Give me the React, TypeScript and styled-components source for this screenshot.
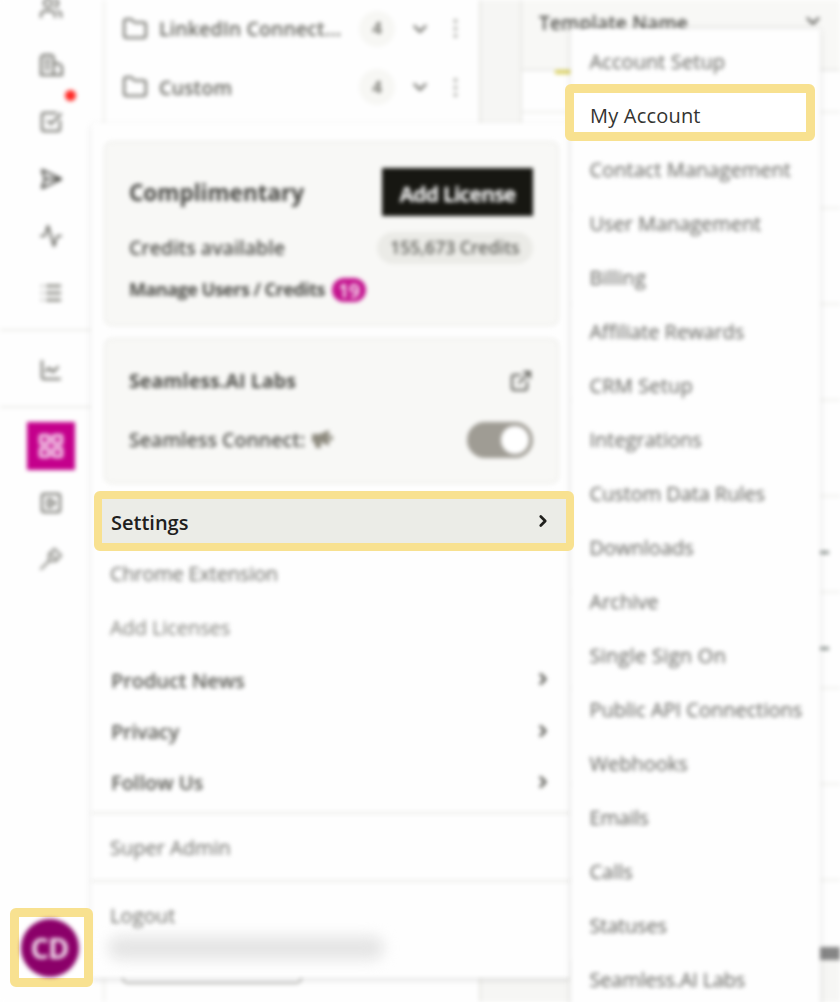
import React from 'react';
import styled, { createGlobalStyle, css } from 'styled-components';
import {
  Users, SquareCheckBig, SendHorizontal, Activity, ChartLine, LayoutGrid, SquarePlay,
  Folder, ChevronDown, ChevronRight, EllipsisVertical, ExternalLink,
} from 'lucide-react';

const Global = createGlobalStyle`
  * { box-sizing: border-box; }
  body { margin: 0; overflow: hidden; background: #fff; font-family: "Open Sans", "Noto Sans", sans-serif; color: #4b4b46; }
`;

const soft = css`filter: blur(2px);`;

const Page = styled.div`position: relative; width: 840px; height: 1002px; overflow: hidden; background: #fefefe;`;
const Backdrop = styled.div`display: flex; height: 1002px; ${soft}`;

const Rail = styled.nav`width: 105px; flex: none; border-right: 2px solid #efefeb; background: #fefefe;`;
const RailGroup = styled.div<{ $h: number; $lift?: number }>`
  width: 103px; height: ${p => p.$h}px; border-bottom: 2px solid #ededea;
  display: flex; flex-direction: column; margin-top: ${p => p.$lift ?? 0}px;
`;
const RailItem = styled.div<{ $h?: number; $tone?: string }>`
  height: ${p => p.$h ?? 57}px; flex: none; width: 102px; display: flex; align-items: center; justify-content: center;
  position: relative; color: ${p => p.$tone ?? '#64645d'};
`;
const Dot = styled.i`position: absolute; left: 65px; top: -3px; width: 11px; height: 11px; border-radius: 50%; background: #ff2a26;`;
const Active = styled.div`width: 48px; height: 48px; background: #c4008c; color: #f3cbe8; display: grid; place-items: center;`;

const Folders = styled.section`width: 376px; flex: none; background: #fefefe; border-right: 2px solid #e6e6e2; display: flex; flex-direction: column;`;
const FolderRow = styled.div`display: flex; align-items: center; height: 60px; padding: 0 11px 0 17px; color: #64645d; flex: none; &:first-child { height: 57px; }`;
const FolderName = styled.span`font-size: 19.5px; font-weight: 600; margin-left: 11px; width: 200px; letter-spacing: 0.12px; white-space: nowrap;`;
const Count = styled.span`width: 36px; height: 36px; border-radius: 50%; background: #f7f7f4; font-size: 17px; font-weight: 600; display: grid; place-items: center; margin-right: 14px; padding-bottom: 2px;`;
const More = styled(EllipsisVertical)`margin-left: auto; color: #a2a29c;`;
const SaveBar = styled.div`width: 180px; height: 30px; border: 2px solid #b4b4b0; border-radius: 6px; margin: auto 0 18px 17px;`;

const Workspace = styled.main`flex: 1; background: #f6f6f4; padding-left: 39px;`;
const Table = styled.div`background: #fefefe; border-left: 2px solid #e9e9e6; height: 960px; display: flex; flex-direction: column;`;
const TableHead = styled.div`height: 71px; flex: none; background: #f8f8f6; border-bottom: 2px solid #e9e9e6; font-size: 19px; font-weight: 600; letter-spacing: 0.2px; padding: 10px 16px 9px 17px; display: flex; justify-content: space-between;`;
const TableRow = styled.div<{ $h: number }>`height: ${p => p.$h}px; flex: none; border-bottom: 2px solid #efefec; display: flex; align-items: flex-start; justify-content: flex-end;`;
const Mark = styled.i`width: 18px; height: 4px; background: #dbd15f; margin: -1px 267px 0 0;`;
const Dash = styled.i`width: 14px; height: 3px; background: #858d89; margin: 54px 11px 0 0;`;
const ScrollThumb = styled.div`height: 13px; margin: 66px 0 0 80px; background: #858585; flex: none;`;

const Menu = styled.aside`
  position: absolute; left: 91px; top: 123px; width: 480px; height: 855px; display: flex; flex-direction: column; padding-top: 18px;
  &::before { content: ""; position: absolute; inset: 0; background: #fefefe; box-shadow: 0 2px 5px #0002; border-radius: 4px; ${soft} }
  > * { position: relative; }
`;
const Card = styled.div<{ $h: number }>`
  height: ${p => p.$h}px; flex: none; margin: 0 12px 12px 13px; padding: 0 24px 0 23px; background: #f8f8f6; border: 2px solid #efefec; border-radius: 8px; ${soft}
`;
const Line = styled.div<{ $h: number; $top?: number }>`display: flex; align-items: center; height: ${p => p.$h}px; margin-top: ${p => p.$top ?? 0}px; white-space: nowrap;`;
const Spread = styled(Line)`justify-content: space-between;`;
const Plan = styled.b`font-size: 22.5px; font-weight: 700; letter-spacing: 0.02px; color: #42423e;`;
const Label = styled.span<{ $size?: number; $weight?: number; $gap?: number }>`
  font-size: ${p => p.$size ?? 19.5}px; font-weight: ${p => p.$weight ?? 600}; letter-spacing: ${p => p.$gap ?? 0}px; color: #4b4b46;
  display: flex; align-items: center; gap: 6px; padding-bottom: 2px;
`;
const AddButton = styled.button`width: 151px; height: 48px; border: 0; background: #171712; color: #fff; font: 700 21px "Open Sans", sans-serif; letter-spacing: -0.8px; padding: 3px 0 0;`;
const Pill = styled.span`width: 156px; height: 32px; border-radius: 16px; background: #ebebe7; font-size: 17.5px; font-weight: 600; display: grid; place-items: center; color: #5f5f59; padding-bottom: 2px;`;
const Tag = styled.span`width: 34px; height: 24px; margin-left: 7px; border-radius: 12px; background: #c4148f; color: #fff; font-size: 19px; font-weight: 600; display: grid; place-items: center;`;
const Toggle = styled.span`width: 66px; height: 36px; border-radius: 18px; background: #9f9c94; display: flex; justify-content: flex-end; padding: 4px;
  &::after { content: ""; width: 28px; height: 28px; border-radius: 50%; background: #fff; }`;

const Settings = styled.div`
  display: flex; align-items: center; justify-content: space-between; height: 60px; flex: none; width: 480px; margin: -5px 0 -5px 3px;
  border: 8.5px solid #f8e190; border-radius: 6px; background: #ebece7; color: #20201d; padding: 2px 14px 0 9px; font-size: 20px; font-weight: 600; letter-spacing: 0; z-index: 3;
  svg { margin-top: -3px; }
`;
const MenuItem = styled.div<{ $h: number; $bold?: boolean; $tone?: string; $gap?: number }>`
  height: ${p => p.$h}px; flex: none; display: flex; align-items: center; justify-content: space-between;
  padding: 0 19px 0 ${p => (p.$bold ? 20 : 19)}px; font-size: 20px; font-weight: ${p => (p.$bold ? 600 : 400)};
  letter-spacing: ${p => p.$gap ?? 0}px; color: ${p => p.$tone ?? '#55554f'}; ${soft}
  svg { margin-top: -2px; }
`;
const Rule = styled.hr`height: 2px; width: 480px; flex: none; margin: 0; border: 0; background: #ebebe8; ${soft}`;
const LinksEnd = styled(Rule)`margin-top: 4px;`;
const Redacted = styled.div`width: 276px; height: 24px; flex: none; margin: -12px 0 0 17px; border-radius: 13px; background: #e5e5e5; filter: blur(7px);`;

const Submenu = styled.aside`
  position: absolute; left: 571px; top: 29px; width: 249px; height: 990px; padding-top: 5px; display: flex; flex-direction: column;
  &::before { content: ""; position: absolute; inset: 0; background: #fefefe; box-shadow: 0 0 6px #0002; ${soft} }
  > * { position: relative; }
`;
const SubItem = styled.div<{ $gap?: number }>`
  height: 54px; flex: none; padding-left: 18.5px; display: flex; align-items: center; font-size: 20px; color: #5f5f5a; white-space: nowrap;
  letter-spacing: ${p => p.$gap ?? 0}px; ${soft}
`;
const CurrentItem = styled(SubItem)`
  filter: none; color: #343431; height: 57px; width: 250px; margin: -4px 0 1px -6px; border: 9px solid #f8e190; border-radius: 6px; padding: 6px 0 0 16px; background: #fff; z-index: 4;
`;
const AvatarFrame = styled.div`position: absolute; left: 10px; top: 908px; width: 83px; height: 79px; border: 9px solid #f8e190; border-radius: 6px; background: #fff; display: grid; place-items: center; z-index: 3;`;
const Avatar = styled.div`width: 58px; height: 58px; border-radius: 50%; background: #8b0069; color: #efd9e9; font-size: 29px; font-weight: 700; letter-spacing: -1px; display: grid; place-items: center; margin-left: -4px; ${soft}`;

const Building = () => (
  <svg width="25" height="25" viewBox="0 0 24 24" fill="none" stroke="currentColor" strokeWidth="2">
    <path d="M2 22V5l2-2h8l2 2v17M14 11h5l3 3v8H1M5.5 8h5M5.5 12h5M5.5 16h5" />
  </svg>
);
const ListIcon = () => (
  <svg width="24" height="24" viewBox="0 0 24 24" fill="none" stroke="currentColor" strokeWidth="2.6">
    <path d="M7 5h15M7 12h15M7 19h15" /><path d="M2 5h2M2 12h2M2 19h2" strokeWidth="1.6" />
  </svg>
);
const KeyIcon = () => (
  <svg width="24" height="24" viewBox="0 0 24 24" fill="none" stroke="currentColor" strokeWidth="2">
    <path d="M10 7 15.5 2 22 8.5 17 14 10 14ZM10 14 1.5 22.5M12 7l5 5" />
  </svg>
);
const Megaphone = () => (
  <svg width="23" height="21" viewBox="0 0 23 21" fill="#8f8c80">
    <path d="M1 5h8l9-4v16l-8-4v6H5l-2-6H1ZM19 6q3 0 3 3t-3 3Z" />
  </svg>
);

const submenuItems: [string, number?][] = [
  ['Contact Management', 0.04], ['User Management', -0.05], ['Billing'], ['Affiliate Rewards', -0.08], ['CRM Setup', 0.15], ['Integrations'],
  ['Custom Data Rules', -0.08], ['Downloads'], ['Archive'], ['Single Sign On', 0.28], ['Public API Connections'], ['Webhooks'],
  ['Emails', -0.2], ['Calls'], ['Statuses', -0.2], ['Seamless.AI Labs', -0.22],
];

export default function App() {
  return (
    <Page>
      <Global />
      <Backdrop>
        <Rail>
          <RailGroup $h={352} $lift={-21}>
            <RailItem><Users size={24} /></RailItem>
            <RailItem><Building /></RailItem>
            <RailItem><Dot /><SquareCheckBig size={24} /></RailItem>
            <RailItem $tone="#484843"><SendHorizontal size={24} /></RailItem>
            <RailItem><Activity size={24} /></RailItem>
            <RailItem $tone="#77776f"><ListIcon /></RailItem>
          </RailGroup>
          <RailGroup $h={77}><RailItem $h={77}><ChartLine size={24} /></RailItem></RailGroup>
          <RailItem $h={75}><Active><LayoutGrid size={28} strokeWidth={3.2} /></Active></RailItem>
          <RailItem $h={39}><SquarePlay size={24} /></RailItem>
          <RailItem $h={74} $tone="#85857f"><KeyIcon /></RailItem>
        </Rail>
        <Folders>
          {['LinkedIn Connect...', 'Custom'].map(name => (
            <FolderRow key={name}>
              <Folder size={26} strokeWidth={1.9} />
              <FolderName>{name}</FolderName>
              <Count>4</Count>
              <ChevronDown size={22} strokeWidth={2.5} />
              <More size={25} strokeWidth={1.6} />
            </FolderRow>
          ))}
          <SaveBar />
        </Folders>
        <Workspace>
          <Table>
            <TableHead><span>Template Name</span><ChevronDown size={22} strokeWidth={2.2} /></TableHead>
            <TableRow $h={42}><Mark /></TableRow>
            {[0, 0, 0, 0, 1, 1, 0, 0].map((d, i) => <TableRow key={i} $h={96}>{d ? <Dash /> : null}</TableRow>)}
            <ScrollThumb />
          </Table>
        </Workspace>
      </Backdrop>

      <Menu>
        <Card $h={185}>
          <Spread $h={50} $top={24}><Plan>Complimentary</Plan><AddButton>Add License</AddButton></Spread>
          <Spread $h={32} $top={15}><Label>Credits available</Label><Pill>155,673 Credits</Pill></Spread>
          <Line $h={24} $top={14}><Label $size={18} $weight={700} $gap={-0.5}>Manage Users / Credits</Label><Tag>19</Tag></Line>
        </Card>
        <Card $h={146}>
          <Spread $h={24} $top={29}><Label $weight={700} $gap={0.1}>Seamless.AI Labs</Label><ExternalLink size={24} color="#55554f" /></Spread>
          <Spread $h={36} $top={29}><Label $gap={0.05}>Seamless Connect: <Megaphone /></Label><Toggle /></Spread>
        </Card>
        <Settings>Settings<ChevronRight size={18} strokeWidth={3.6} /></Settings>
        <MenuItem $h={54} $tone="#6b6b66" $gap={-0.2}>Chrome Extension</MenuItem>
        <MenuItem $h={54} $tone="#7f7f79" $gap={-0.08}>Add Licenses</MenuItem>
        <MenuItem $h={52} $bold $gap={-0.08}>Product News<ChevronRight size={18} strokeWidth={3.6} /></MenuItem>
        <MenuItem $h={51} $bold $gap={-0.2}>Privacy<ChevronRight size={18} strokeWidth={3.6} /></MenuItem>
        <MenuItem $h={51} $bold>Follow Us<ChevronRight size={18} strokeWidth={3.6} /></MenuItem>
        <LinksEnd />
        <MenuItem $h={66} $tone="#6b6b66">Super Admin</MenuItem>
        <Rule />
        <MenuItem $h={66} $tone="#6b6b66" $gap={0.1}>Logout</MenuItem>
        <Redacted />
      </Menu>

      <Submenu>
        <SubItem $gap={0.08}>Account Setup</SubItem>
        <CurrentItem $gap={0.2}>My Account</CurrentItem>
        {submenuItems.map(([label, gap]) => <SubItem key={label} $gap={gap}>{label}</SubItem>)}
      </Submenu>
      <AvatarFrame><Avatar>CD</Avatar></AvatarFrame>
    </Page>
  );
}
